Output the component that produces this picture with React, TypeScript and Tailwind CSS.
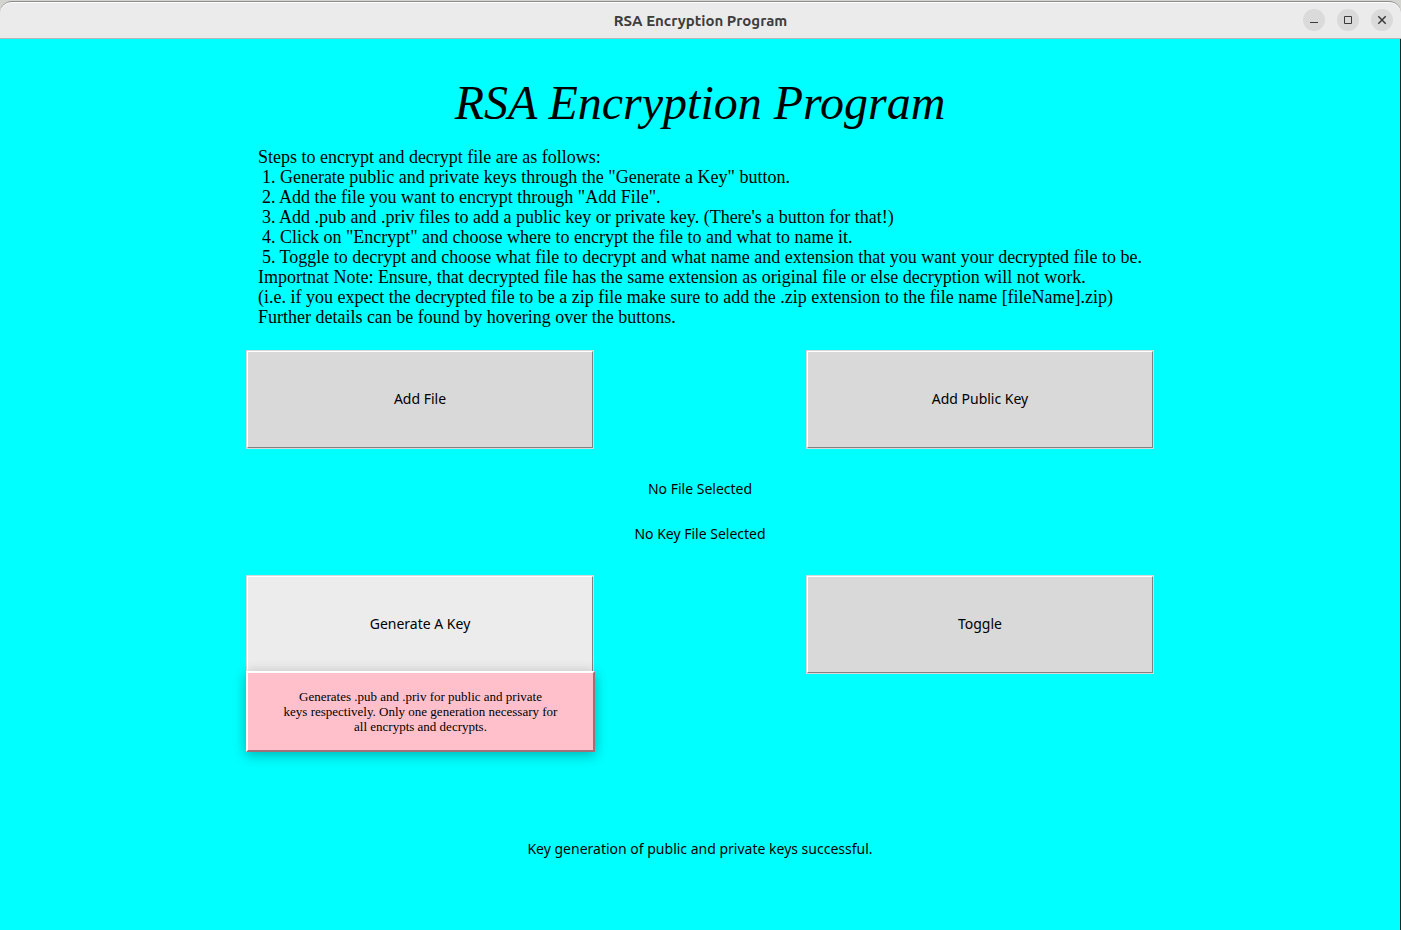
import React from "react";

const steps = [
  'Generate public and private keys through the "Generate a Key" button.',
  'Add the file you want to encrypt through "Add File".',
  "Add .pub and .priv files to add a public key or private key. (There's a button for that!)",
  'Click on "Encrypt" and choose where to encrypt the file to and what to name it.',
  "Toggle to decrypt and choose what file to decrypt and what name and extension that you want your decrypted file to be.",
];

function WindowButton({ label, children }: { label: string; children: React.ReactNode }) {
  return (
    <button
      type="button"
      aria-label={label}
      className="flex size-[22px] items-center justify-center rounded-full bg-[#dadada] text-[#3a3a3a]"
    >
      <svg width="12" height="12" viewBox="0 0 12 12" fill="none" stroke="currentColor" aria-hidden="true">
        {children}
      </svg>
    </button>
  );
}

function TitleBar() {
  return (
    <div className="bg-[#d3d3d0]">
      <header className="mt-px grid h-[38px] grid-cols-[1fr_auto_1fr] items-center rounded-t-xl border-t border-b border-t-[#8c8c8c] border-b-[#b9b5b5] bg-[#ebebeb] px-2 shadow-[inset_0_1px_0_#ffffff]">
        <span />
        <div className="pt-px font-['Ubuntu','Noto_Sans',sans-serif] text-[15px] leading-5 font-bold text-[#3d3d3d]">
          RSA Encryption Program
        </div>
        <div className="flex justify-end gap-3">
          <WindowButton label="Minimize">
            <path d="M2 8.5H10" />
          </WindowButton>
          <WindowButton label="Maximize">
            <path d="M2.5 2.5H9.5V9.5H2.5Z" />
          </WindowButton>
          <WindowButton label="Close">
            <path d="M2.3 2.3L9.7 9.7M9.7 2.3L2.3 9.7" strokeWidth="1.5" />
          </WindowButton>
        </div>
      </header>
    </div>
  );
}

function ActionButton({ children, active = false }: { children: string; active?: boolean }) {
  return (
    <div className="w-full border border-[#d9d9d9]">
      <button
        type="button"
        className={
          "block h-[97px] w-full border border-t-white border-r-[#828282] border-b-[#828282] border-l-white pb-0.5 text-center " +
          (active ? "bg-[#ececec]" : "bg-[#d9d9d9]")
        }
      >
        {children}
      </button>
    </div>
  );
}

export default function App() {
  return (
    <div className="flex min-h-screen flex-col bg-[#00ffff] text-black">
      <TitleBar />
      <main className="flex grow flex-col items-center border-r border-[#222222] px-4 pb-16 font-['Noto_Sans',sans-serif] text-sm">
        <h1 className="mt-8 text-center font-['Z003','URW_Chancery_L','Apple_Chancery','Liberation_Serif',serif] text-5xl leading-[64px] italic">
          RSA Encryption Program
        </h1>
        <section className="mt-3 font-['Liberation_Serif',serif] text-lg leading-5">
          <p>Steps to encrypt and decrypt file are as follows:</p>
          <ol className="pl-1">
            {steps.map((step, i) => (
              <li key={step}>
                {i + 1}. {step}
              </li>
            ))}
          </ol>
          <p>
            Importnat Note: Ensure, that decrypted file has the same extension as original file or else decryption will not
            work.
          </p>
          <p>
            (i.e. if you expect the decrypted file to be a zip file make sure to add the .zip extension to the file name
            [fileName].zip)
          </p>
          <p>Further details can be found by hovering over the buttons.</p>
        </section>
        <div className="mt-[23px] grid w-full max-w-[908px] grid-cols-[348px_348px] justify-between">
          <ActionButton>Add File</ActionButton>
          <ActionButton>Add Public Key</ActionButton>
        </div>
        <p className="mt-[30px]">No File Selected</p>
        <p className="mt-[25px]">No Key File Selected</p>
        <div className="mt-[31px] grid w-full max-w-[908px] grid-cols-[348px_348px] justify-between">
          <div className="relative">
            <ActionButton active>Generate A Key</ActionButton>
            <div
              role="tooltip"
              className="absolute top-24 left-0 flex h-[81px] w-[349px] items-center justify-center border-2 border-t-white border-r-[#a07078] border-b-[#a07078] border-l-white bg-[#ffc0cb] text-center font-['Liberation_Serif',serif] text-[13px] leading-[15px] shadow-[0_3px_12px_rgba(0,0,0,0.3)]"
            >
              <p>
                Generates .pub and .priv for public and private
                <br />
                keys respectively. Only one generation necessary for
                <br />
                all encrypts and decrypts.
              </p>
            </div>
          </div>
          <ActionButton>Toggle</ActionButton>
        </div>
        <p className="mt-[165px]">Key generation of public and private keys successful.</p>
      </main>
    </div>
  );
}
